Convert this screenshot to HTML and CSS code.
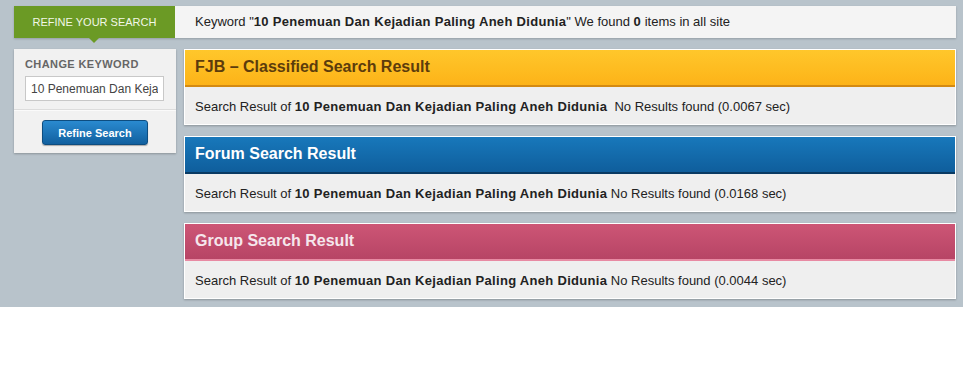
FILE: index.html
```html
<!DOCTYPE html>
<html lang="en">
<head>
    <meta charset="UTF-8">
    <title>Search Result</title>
    <link rel="stylesheet" href="styles.css">
</head>
<body>
<div class="page">
    <div class="topbar">
        <div class="tab">REFINE YOUR SEARCH</div>
        <div class="summary">Keyword "<b>10 Penemuan Dan Kejadian Paling Aneh Didunia</b>" We found <b>0</b> items in all site</div>
    </div>

    <div class="content">
        <div class="sidebar">
            <div class="side-top">
                <div class="label">CHANGE KEYWORD</div>
                <input class="keyword" type="text" value="10 Penemuan Dan Kejadian Paling Aneh Didunia">
            </div>
            <div class="side-bottom">
                <button class="btn">Refine Search</button>
            </div>
        </div>

        <div class="results">
            <div class="panel">
                <div class="head orange">FJB &ndash; Classified Search Result</div>
                <div class="body">Search Result of <b>10 Penemuan Dan Kejadian Paling Aneh Didunia</b>&nbsp; No Results found (0.0067 sec)</div>
            </div>
            <div class="panel">
                <div class="head blue">Forum Search Result</div>
                <div class="body">Search Result of <b>10 Penemuan Dan Kejadian Paling Aneh Didunia</b> No Results found (0.0168 sec)</div>
            </div>
            <div class="panel">
                <div class="head pink">Group Search Result</div>
                <div class="body">Search Result of <b>10 Penemuan Dan Kejadian Paling Aneh Didunia</b> No Results found (0.0044 sec)</div>
            </div>
        </div>
    </div>
</div>
</body>
</html>
```

FILE: styles.css
```css
body {
    margin: 0;
    background: #fff;
    font-family: "Liberation Sans", Arial, sans-serif;
    font-size: 13px;
    color: #222;
}
b {
    letter-spacing: 0.3px;
}
.page {
    background: #b8c3cb;
    height: 307px;
    padding: 6px 7px 0 14px;
    box-sizing: border-box;
}

.topbar {
    display: flex;
    height: 32px;
    box-shadow: 0 1px 2px rgba(0,0,0,0.2);
}
.tab {
    position: relative;
    width: 161px;
    background: #6b9a25;
    color: #f2f7e8;
    font-size: 11px;
    text-align: center;
    line-height: 32px;
}
.tab:after {
    content: "";
    position: absolute;
    left: 75px;
    bottom: -5px;
    border-left: 5px solid transparent;
    border-right: 5px solid transparent;
    border-top: 5px solid #6b9a25;
}
.summary {
    flex: 1;
    background: #f4f4f4;
    line-height: 32px;
    padding-left: 20px;
}

.content {
    display: flex;
    gap: 8px;
    margin-top: 11px;
    align-items: flex-start;
}
.sidebar {
    width: 162px;
    background: #f1f1f1;
    box-shadow: 0 1px 2px rgba(0,0,0,0.25);
}
.side-top {
    padding: 9px 11px 8px;
    border-bottom: 1px solid #dcdcdc;
}
.label {
    font-size: 11px;
    font-weight: bold;
    color: #666;
    letter-spacing: 0.4px;
    margin-bottom: 6px;
}
.keyword {
    width: 139px;
    height: 25px;
    box-sizing: border-box;
    border: 1px solid #c8c8c8;
    background: #fff;
    font-family: "Liberation Sans", Arial, sans-serif;
    font-size: 12px;
    color: #444;
    padding: 0 5px;
    margin: 0;
}
.side-bottom {
    border-top: 1px solid #fafafa;
    padding: 9px 0 8px;
    text-align: center;
}
.btn {
    width: 106px;
    height: 25px;
    border: 1px solid #0d4d80;
    border-radius: 3px;
    background: linear-gradient(#2a8ad0, #11609f);
    color: #fff;
    font-family: "Liberation Sans", Arial, sans-serif;
    font-size: 11px;
    font-weight: bold;
    padding: 0;
    box-shadow: 0 1px 1px rgba(0,0,0,0.3);
}

.results {
    flex: 1;
    display: flex;
    flex-direction: column;
    gap: 11px;
}
.panel {
    border: 1px solid #fff;
    box-shadow: 0 1px 2px rgba(0,0,0,0.25);
}
.head {
    height: 37px;
    line-height: 34px;
    padding-left: 10px;
    font-size: 16px;
    font-weight: bold;
    box-sizing: border-box;
}
.orange {
    background: linear-gradient(#ffc72b, #fdb318);
    border-bottom: 2px solid #d48a12;
    color: #5c3c0c;
}
.blue {
    background: linear-gradient(#1878bb, #0f5e9c);
    border-bottom: 2px solid #093a63;
    color: #fff;
}
.pink {
    background: linear-gradient(#cd5676, #b74465);
    border-bottom: 2px solid #e88aa3;
    color: #f5e6ec;
}
.body {
    background: #efefef;
    height: 37px;
    line-height: 37px;
    padding: 1px 0 0 10px;
    box-sizing: border-box;
}
```
